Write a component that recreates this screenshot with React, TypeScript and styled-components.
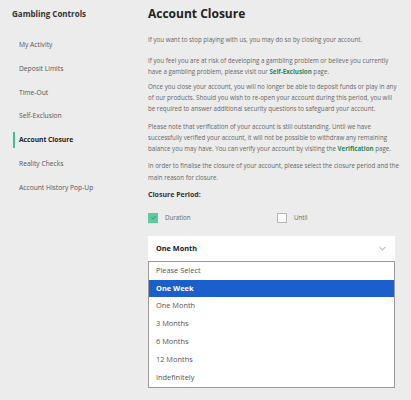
import styled, { createGlobalStyle } from "styled-components";

const GlobalStyle = createGlobalStyle`
  html, body {
    margin: 0;
    padding: 0;
    background: #ececec;
  }
  body {
    font-family: 'Open Sans', 'Noto Sans', sans-serif;
    color: #555;
  }
`

const Page = styled.div`
  display: flex;
  width: 411px;
  height: 400px;
  overflow: hidden;
  background: #ececec;
`

const Sidebar = styled.nav`
  width: 148px;
  flex-shrink: 0;
  padding: 8px 0 0 12px;
  box-sizing: border-box;
`

const SidebarTitle = styled.h3`
  margin: 0 0 13px;
  font-size: 8px;
  line-height: 12px;
  font-weight: 700;
  color: #333;
`

const NavItem = styled.div<{ $active?: boolean }>`
  position: relative;
  height: 23.8px;
  line-height: 23.8px;
  padding-left: 7px;
  font-size: 6.7px;
  font-weight: ${p => (p.$active ? 700 : 400)};
  color: ${p => (p.$active ? "#222" : "#555")};

  &::before {
    content: "";
    display: ${p => (p.$active ? "block" : "none")};
    position: absolute;
    left: 1px;
    top: 4px;
    bottom: 4px;
    width: 1.5px;
    background: #3fbf8c;
  }
`

const Main = styled.main`
  flex: 1;
  padding: 6px 6px 0 0;
  box-sizing: border-box;
`

const Title = styled.h1`
  margin: 0 0 12px;
  font-size: 12px;
  line-height: 16px;
  font-weight: 700;
  color: #222;
`

const Para = styled.p<{ $gap?: number }>`
  margin: 0 0 ${p => p.$gap ?? 5.8}px;
  font-size: 6.2px;
  line-height: 11.3px;
  color: #666;
`

const Link = styled.a`
  color: #1d8a5c;
  font-weight: 700;
  text-decoration: none;
`

const Label = styled.div`
  margin: 4px 0 11px;
  font-size: 7px;
  line-height: 12px;
  font-weight: 700;
  color: #333;
`

const RadioRow = styled.div`
  display: flex;
  align-items: center;
  height: 12px;
  margin-bottom: 12px;
`

const Choice = styled.label`
  display: flex;
  align-items: center;
  gap: 7px;
  width: 129px;
  font-size: 6.2px;
  color: #666;
`

const Box = styled.span<{ $checked?: boolean }>`
  display: flex;
  align-items: center;
  justify-content: center;
  width: 10px;
  height: 10px;
  box-sizing: border-box;
  background: ${p => (p.$checked ? "#5ccb9d" : "#fff")};
  border: 1px solid ${p => (p.$checked ? "#5ccb9d" : "#b5b5b5")};
`

const Dropdown = styled.div`
  width: 247px;
`

const SelectBox = styled.div`
  display: flex;
  align-items: center;
  justify-content: space-between;
  height: 25px;
  padding: 0 9px 0 8px;
  box-sizing: border-box;
  background: #fff;
  font-size: 7.3px;
  font-weight: 700;
  color: #222;
`

const OptionList = styled.ul`
  margin: 0;
  padding: 0;
  list-style: none;
  background: #fff;
  border: 1px solid #9a9a9a;
`

const Option = styled.li<{ $selected?: boolean }>`
  height: 17.9px;
  line-height: 17.9px;
  padding-left: 7px;
  font-size: 7.4px;
  background: ${p => (p.$selected ? "#1a5fcc" : "#fff")};
  color: ${p => (p.$selected ? "#fff" : "#555")};
  font-weight: ${p => (p.$selected ? 700 : 400)};
`

const navItems = [
  "My Activity",
  "Deposit Limits",
  "Time-Out",
  "Self-Exclusion",
  "Account Closure",
  "Reality Checks",
  "Account History Pop-Up",
]

const periods = [
  "Please Select",
  "One Week",
  "One Month",
  "3 Months",
  "6 Months",
  "12 Months",
  "Indefinitely",
]

const Check = () => (
  <svg width="7" height="7" viewBox="0 0 10 10">
    <path d="M2 5.2 L4.2 7.3 L8 2.8" fill="none" stroke="#2f9a6d" strokeWidth="1.4" />
  </svg>
)

const Chevron = () => (
  <svg width="7" height="5" viewBox="0 0 10 6">
    <path d="M1 1 L5 5 L9 1" fill="none" stroke="#888" strokeWidth="1.2" />
  </svg>
)

const App = () => {
  return (
    <>
      <GlobalStyle />
      <Page>
        <Sidebar>
          <SidebarTitle>Gambling Controls</SidebarTitle>
          {navItems.map(item => (
            <NavItem key={item} $active={item === "Account Closure"}>{item}</NavItem>
          ))}
        </Sidebar>
        <Main>
          <Title>Account Closure</Title>
          <Para $gap={9.5}>If you want to stop playing with us, you may do so by closing your account.</Para>
          <Para $gap={3.5}>
            If you feel you are at risk of developing a gambling problem or believe you currently<br />
            have a gambling problem, please visit our <Link href="#">Self-Exclusion</Link> page.
          </Para>
          <Para>
            Once you close your account, you will no longer be able to deposit funds or play in any<br />
            of our products. Should you wish to re-open your account during this period, you will<br />
            be required to answer additional security questions to safeguard your account.
          </Para>
          <Para>
            Please note that verification of your account is still outstanding. Until we have<br />
            successfully verified your account, it will not be possible to withdraw any remaining<br />
            balance you may have. You can verify your account by visiting the <Link href="#">Verification</Link> page.
          </Para>
          <Para>
            In order to finalise the closure of your account, please select the closure period and the<br />
            main reason for closure.
          </Para>
          <Label>Closure Period:</Label>
          <RadioRow>
            <Choice>
              <Box $checked><Check /></Box>
              Duration
            </Choice>
            <Choice>
              <Box />
              Until
            </Choice>
          </RadioRow>
          <Dropdown>
            <SelectBox>
              One Month
              <Chevron />
            </SelectBox>
            <OptionList>
              {periods.map(p => (
                <Option key={p} $selected={p === "One Week"}>{p}</Option>
              ))}
            </OptionList>
          </Dropdown>
        </Main>
      </Page>
    </>
  )
}

export default App;
